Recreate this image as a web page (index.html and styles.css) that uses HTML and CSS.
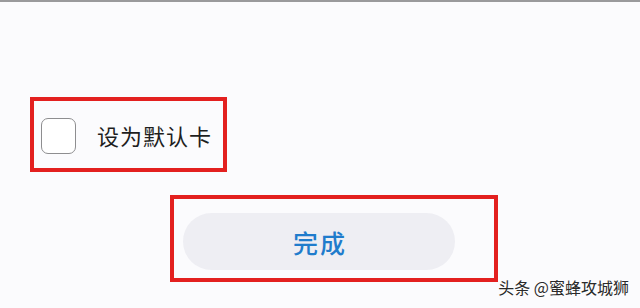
FILE: index.html
```html
<!DOCTYPE html>
<html lang="zh-CN">
<head>
    <meta charset="UTF-8">
    <meta name="viewport" content="width=device-width, initial-scale=1.0">
    <title>设为默认卡</title>
    <link rel="stylesheet" href="styles.css">
</head>
<body>
    <div class="page">
        <!-- Default card option -->
        <div class="mark-box default-box">
            <span class="checkbox"></span>
            <span class="default-label">设为默认卡</span>
        </div>

        <!-- Done button -->
        <div class="mark-box done-box">
            <button class="done-button">完成</button>
        </div>
    </div>

    <div class="watermark">头条 @蜜蜂攻城狮</div>
</body>
</html>
```

FILE: styles.css
```css
body {
    margin: 0;
    height: 308px;
    font-family: "Noto Sans CJK SC", "Noto Sans", sans-serif;
    background-color: #fbfbfd;
    border-top: 2px solid #9a9a9c;
    box-sizing: border-box;
    position: relative;
    overflow: hidden;
}

.page {
    padding-top: 95px;
}

.mark-box {
    border: 4px solid #e3201f;
    box-sizing: border-box;
}

.default-box {
    margin-left: 30px;
    width: 197px;
    height: 75px;
    display: flex;
    align-items: center;
    padding-left: 7px;
    gap: 21px;
}

.checkbox {
    width: 35px;
    height: 36px;
    box-sizing: border-box;
    border: 1.5px solid #8e8e90;
    border-radius: 7px;
    background-color: #fff;
    margin-top: 2px;
}

.default-label {
    font-size: 22px;
    color: #1e1e1e;
    letter-spacing: 1px;
    margin-top: 1px;
}

.done-box {
    margin-top: 23px;
    margin-left: 170px;
    width: 328px;
    height: 87px;
    padding: 14px 0 0 9px;
}

.done-button {
    display: block;
    width: 272px;
    height: 57px;
    border: none;
    border-radius: 29px;
    background-color: #eeeef3;
    color: #1f7ccc;
    font-family: inherit;
    font-size: 25px;
    font-weight: 500;
    letter-spacing: 2px;
    padding: 0 0 0 2px;
    cursor: pointer;
}

/* Watermark over the corner */
.watermark {
    position: absolute;
    right: 11px;
    bottom: 9px;
    font-size: 16px;
    color: #2a2a2a;
    text-shadow: 0 0 2px #fff, 0 0 3px #fff;
}
```
